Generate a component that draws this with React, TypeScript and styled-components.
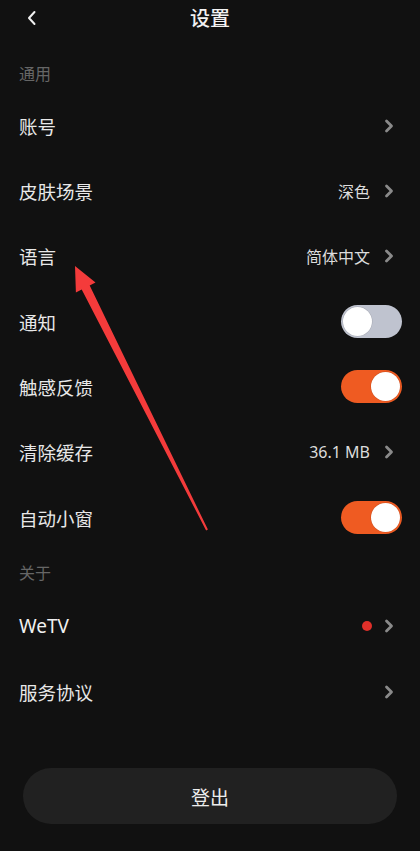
import React from "react";
import styled, { createGlobalStyle } from "styled-components";

const Global = createGlobalStyle`
  html, body { margin: 0; padding: 0; background: #111111; }
  body { font-family: "Noto Sans CJK SC", "Noto Sans", sans-serif; }
  * { box-sizing: border-box; }
`;

const Page = styled.div`
  position: relative;
  width: 420px;
  min-height: 851px;
  background: #111111;
  color: #ececec;
  overflow: hidden;
`;

const Header = styled.div`
  position: relative;
  height: 36px;
  display: flex;
  align-items: center;
  justify-content: center;
`;

const BackBtn = styled.div`
  position: absolute;
  left: 24px;
  top: 9px;
  width: 16px;
  height: 18px;
  display: flex;
  align-items: center;
  justify-content: center;
`;

const Title = styled.div`
  font-size: 20px;
  font-weight: 500;
  color: #f2f2f2;
  line-height: 20px;
`;

const SectionLabel = styled.div<{ $top: number; $bottom: number }>`
  padding: ${(p) => p.$top}px 19px ${(p) => p.$bottom}px;
  font-size: 16px;
  line-height: 20px;
  color: #666666;
`;

const Row = styled.div`
  height: 65.33px;
  display: flex;
  align-items: center;
  padding: 0 18px 0 19px;
`;

const Label = styled.div`
  flex: 1;
  font-size: 18.5px;
  color: #e8e8e8;
`;

const LatinLabel = styled(Label)`
  font-family: "Noto Sans", "Open Sans", sans-serif;
  font-weight: 400;
  font-size: 19px;
  color: #f0f0f0;
`;

const Value = styled.div<{ $latin?: boolean }>`
  font-size: 16px;
  color: #dcdcdc;
  margin-right: 14px;
  font-family: ${(p) => (p.$latin ? '"Noto Sans", sans-serif' : "inherit")};
`;

const Dot = styled.div`
  width: 10px;
  height: 10px;
  border-radius: 50%;
  background: #e0302a;
  margin-right: 12px;
`;

const ChevronWrap = styled.div`
  width: 10px;
  height: 14px;
  margin-right: 8px;
  display: flex;
  align-items: center;
`;

const Track = styled.div<{ $on: boolean }>`
  width: 61px;
  height: 33px;
  border-radius: 17px;
  padding: 2px;
  display: flex;
  justify-content: ${(p) => (p.$on ? "flex-end" : "flex-start")};
  background: ${(p) => (p.$on ? "#ef5b22" : "#bfc3cf")};
`;

const Knob = styled.div`
  width: 29px;
  height: 29px;
  border-radius: 50%;
  background: #ffffff;
  box-shadow: 0 0 0 0.5px rgba(0, 0, 0, 0.15);
`;

const ButtonWrap = styled.div`
  padding: 44px 23px 0;
`;

const LogoutButton = styled.div`
  height: 56px;
  border-radius: 28px;
  background: #212121;
  display: flex;
  align-items: center;
  justify-content: center;
  font-size: 19px;
  color: #ededed;
`;

const ArrowLayer = styled.svg`
  position: absolute;
  left: 0;
  top: 0;
  pointer-events: none;
`;

const Chevron = () => (
  <ChevronWrap>
    <svg width="10" height="14" viewBox="0 0 10 14">
      <path d="M2.5 2 L7.5 7 L2.5 12" fill="none" stroke="#8a8a8a" strokeWidth="2.8" strokeLinecap="round" strokeLinejoin="round" />
    </svg>
  </ChevronWrap>
);

const Toggle = ({ on }: { on: boolean }) => (
  <Track $on={on}>
    <Knob />
  </Track>
);

export default function App() {
  return (
    <Page>
      <Global />
      <Header>
        <BackBtn>
          <svg width="12" height="16" viewBox="0 0 12 16">
            <path d="M8.5 2 L3 8 L8.5 14" fill="none" stroke="#f0f0f0" strokeWidth="2" strokeLinecap="round" strokeLinejoin="round" />
          </svg>
        </BackBtn>
        <Title>设置</Title>
      </Header>

      <SectionLabel $top={27} $bottom={10}>通用</SectionLabel>
      <Row>
        <Label>账号</Label>
        <Chevron />
      </Row>
      <Row>
        <Label>皮肤场景</Label>
        <Value>深色</Value>
        <Chevron />
      </Row>
      <Row>
        <Label>语言</Label>
        <Value>简体中文</Value>
        <Chevron />
      </Row>
      <Row>
        <Label>通知</Label>
        <Toggle on={false} />
      </Row>
      <Row>
        <Label>触感反馈</Label>
        <Toggle on={true} />
      </Row>
      <Row>
        <Label>清除缓存</Label>
        <Value $latin>36.1 MB</Value>
        <Chevron />
      </Row>
      <Row>
        <Label>自动小窗</Label>
        <Toggle on={true} />
      </Row>

      <SectionLabel $top={12} $bottom={11.5}>关于</SectionLabel>
      <Row>
        <LatinLabel>WeTV</LatinLabel>
        <Dot />
        <Chevron />
      </Row>
      <Row>
        <Label>服务协议</Label>
        <Chevron />
      </Row>

      <ButtonWrap>
        <LogoutButton>登出</LogoutButton>
      </ButtonWrap>

      <ArrowLayer width="420" height="851" viewBox="0 0 420 851">
        <polygon
          points="75,266 95.5,282.6 89.7,285.5 207.9,529.6 206.1,530.4 81.7,289.5 75.9,292.4"
          fill="#f43b3b"
        />
      </ArrowLayer>
    </Page>
  );
}
